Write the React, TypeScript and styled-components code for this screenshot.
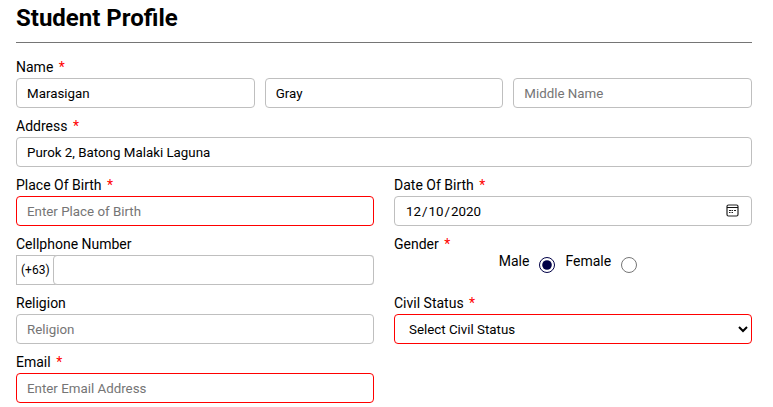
import React from "react";
import styled, { createGlobalStyle, css } from "styled-components";

const GlobalStyle = createGlobalStyle`
  *, *::before, *::after { box-sizing: border-box; }
  body {
    margin: 0;
    background: #fff;
    color: #000;
    font-family: Roboto, sans-serif;
    font-size: 14px;
  }
`;

const Form = styled.form`
  padding: 4px 21px 4px 16px;
`;

const Title = styled.h1`
  margin: 0 0 16px;
  padding-bottom: 10px;
  border-bottom: 1px solid #757575;
  font-size: 24px;
  line-height: 28px;
  font-weight: 700;
`;

const Rows = styled.div`
  display: flex;
  flex-direction: column;
  gap: 10px;
`;

const Columns = styled.div`
  display: grid;
  grid-template-columns: 1fr 1fr;
  gap: 10px 20px;
`;

const Group = styled.fieldset`
  min-width: 0;
  margin: 0;
  padding: 0;
  border: 0;
`;

const labelText = css`
  display: block;
  padding: 0;
  line-height: 16px;
  font-size: 14px;
`;

const Label = styled.label`
  ${labelText}
  padding-bottom: 3px;
`;

const Legend = styled.legend`
  ${labelText}
  padding-bottom: 1px;
`;

const Star = styled.span`
  margin-left: 2px;
  color: #f00;
`;

const NameRow = styled.div`
  display: grid;
  grid-template-columns: repeat(3, 1fr);
  gap: 10px;
`;

const control = css<{ $invalid?: boolean }>`
  display: block;
  width: 100%;
  min-width: 0;
  height: 30px;
  margin: 0;
  border: 1px solid ${(p) => (p.$invalid ? "#f00" : "#bfbfbf")};
  border-radius: 4px;
  background: #fff;
  color: #000;
  font-family: inherit;
`;

const Input = styled.input<{ $invalid?: boolean }>`
  ${control}
  padding: 0 10px;
  &::placeholder { color: #757575; }
`;

const DateInput = styled(Input)`
  &::-webkit-calendar-picker-indicator {
    width: 16px;
    height: 16px;
    padding: 0;
    opacity: 0;
  }
`;

const DateBox = styled.div`
  position: relative;
`;

const CalendarIcon = styled.svg`
  position: absolute;
  top: 8px;
  right: 13px;
  pointer-events: none;
`;

const Select = styled.select<{ $invalid?: boolean }>`
  ${control}
  padding: 0 0 0 10px;
`;

const PhoneBox = styled.div`
  display: flex;
  border: solid #bfbfbf;
  border-width: 1px 0 1px 1px;
  border-radius: 0 4px 4px 0;
  height: 30px;
`;

const Prefix = styled.span`
  flex: none;
  width: 36px;
  padding-left: 4px;
  font-size: 12px;
  line-height: 28px;
`;

const PhoneInput = styled(Input)`
  flex: 1;
  margin: -1px 0;
`;

const Choices = styled.div`
  display: flex;
  justify-content: center;
  gap: 10px;
  padding-right: 10px;
`;

const Choice = styled.label`
  display: flex;
  align-items: flex-start;
  gap: 10px;
  line-height: 16px;
`;

const Radio = styled.input`
  width: 16px;
  height: 16px;
  margin: 4px 0 0;
  accent-color: #000046;
`;

function Required() {
  return <Star aria-hidden="true">*</Star>;
}

export default function App() {
  return (
    <>
      <GlobalStyle />
      <Form>
        <Title>Student Profile</Title>
        <Rows>
          <Group>
            <Label htmlFor="first">Name <Required /></Label>
            <NameRow>
              <Input id="first" defaultValue="Marasigan" />
              <Input aria-label="Last Name" defaultValue="Gray" />
              <Input aria-label="Middle Name" placeholder="Middle Name" />
            </NameRow>
          </Group>
          <div>
            <Label htmlFor="address">Address <Required /></Label>
            <Input id="address" defaultValue="Purok 2, Batong Malaki Laguna" />
          </div>
          <Columns>
            <div>
              <Label htmlFor="birthplace">Place Of Birth <Required /></Label>
              <Input id="birthplace" placeholder="Enter Place of Birth" $invalid />
            </div>
            <div>
              <Label htmlFor="birthdate">Date Of Birth <Required /></Label>
              <DateBox>
                <DateInput id="birthdate" type="date" defaultValue="2020-12-10" />
                <CalendarIcon width="13" height="13" viewBox="0 0 13 13" aria-hidden="true">
                  <rect x="1" y="1" width="11" height="11" rx="1.5" fill="none" stroke="#222" strokeWidth="1.2" />
                  <path d="M1 3.5h11" stroke="#111" />
                  <path d="M3 6.5h2M5.5 6.5h1.5M8 6.5h2M3 8.5h1.5M5.5 8.5h1.5" stroke="#222" />
                </CalendarIcon>
              </DateBox>
            </div>
            <div>
              <Label htmlFor="phone">Cellphone Number</Label>
              <PhoneBox>
                <Prefix>(+63)</Prefix>
                <PhoneInput id="phone" type="tel" />
              </PhoneBox>
            </div>
            <Group>
              <Legend>Gender <Required /></Legend>
              <Choices>
                <Choice>Male<Radio type="radio" name="gender" value="male" defaultChecked /></Choice>
                <Choice>Female<Radio type="radio" name="gender" value="female" /></Choice>
              </Choices>
            </Group>
            <div>
              <Label htmlFor="religion">Religion</Label>
              <Input id="religion" placeholder="Religion" />
            </div>
            <div>
              <Label htmlFor="civil">Civil Status <Required /></Label>
              <Select id="civil" $invalid defaultValue="">
                <option value="">Select Civil Status</option>
                <option value="single">Single</option>
                <option value="married">Married</option>
              </Select>
            </div>
            <div>
              <Label htmlFor="email">Email <Required /></Label>
              <Input id="email" type="email" placeholder="Enter Email Address" $invalid />
            </div>
          </Columns>
        </Rows>
      </Form>
    </>
  );
}
